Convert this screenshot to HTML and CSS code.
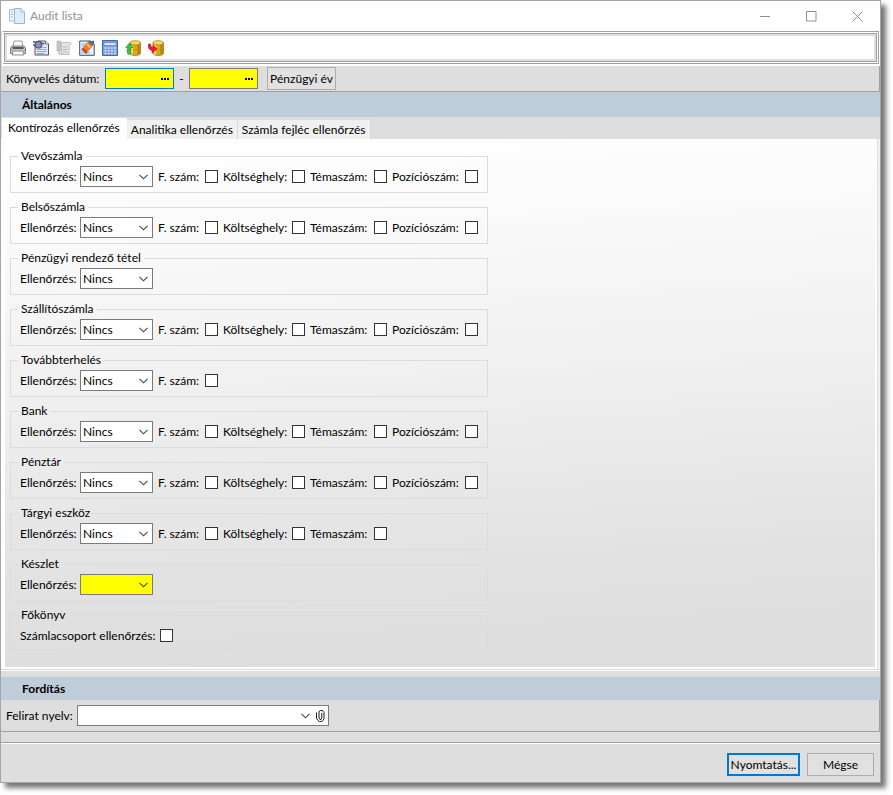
FILE: index.html
```html
<!DOCTYPE html>
<html lang="hu">
<head>
<meta charset="utf-8">
<title>Audit lista</title>
<link rel="stylesheet" href="styles.css">
</head>
<body>
<svg class="defs" aria-hidden="true">
  <symbol id="chevron" viewBox="0 0 9 6"><path d="M.5 .8l4 4 4-4" fill="none" stroke="#444" stroke-width="1.1"/></symbol>
  <symbol id="database" viewBox="0 0 16 16">
    <path d="M5 2.500v11c0 2.600 10.500 2.600 10.500 0v-11z" fill="#dda81c" stroke="#8e6710" stroke-width=".7"/>
    <path d="M7 5v9.500" stroke="#f8df72" stroke-width="2"/><path d="M13.500 4.500v9.500" stroke="#b27a0e" stroke-width="2"/>
    <ellipse cx="10.200" cy="2.800" rx="5.200" ry="2.100" fill="#f6d75e" stroke="#a37a18" stroke-width=".7"/>
    <path d="M5 8.500c1 2 9.500 2 10.500 0" fill="none" stroke="#b88818" stroke-width=".6"/>
  </symbol>
</svg>
<main class="window">
  <header class="titlebar">
    <svg class="icon" viewBox="0 0 16 16"><path d="M.5 1.500h5.500v11.500H.5z" fill="#eef6fd" stroke="#9dbbdc"/><path d="M2 4h2M2 6.500h2M2 9h2" stroke="#9dbbdc"/><path d="M5.500 .5h6.500l3.500 3.500v11.500h-10z" fill="#dceefb" stroke="#94b4d8"/><path d="M12 .5v3.500h3.500" fill="#fff" stroke="#94b4d8"/></svg>
    <h1>Audit lista</h1>
    <div class="caption-buttons">
      <button aria-label="Kis méret"><svg viewBox="0 0 11 11"><path d="M0 5.500h10"/></svg></button>
      <button aria-label="Teljes méret"><svg viewBox="0 0 11 11"><path d="M.5 .5h9.500v9.500H.5z"/></svg></button>
      <button aria-label="Bezárás"><svg viewBox="0 0 11 11"><path d="M.5 .5l10 10M10.500 .5l-10 10"/></svg></button>
    </div>
  </header>

  <div class="toolbar-frame"><div class="toolbar">
    <button aria-label="Nyomtatás"><svg class="icon" viewBox="0 0 16 16"><path d="M4 1h8l1 6H3z" fill="#fafafa" stroke="#858585" stroke-width=".8"/><path d="M2 6h12l1.500 2v5.500H.5V8z" fill="#c9cacb" stroke="#636568" stroke-width=".8"/><path d="M2.500 8h11" stroke="#38393b" stroke-width="1.600"/><path d="M3 11h10l1 4H2z" fill="#f6f6f6" stroke="#757779" stroke-width=".8"/><path d="M1 10h1.500M13.500 10H15" stroke="#64a860"/></svg></button>
    <button aria-label="Előnézet"><svg class="icon" viewBox="0 0 16 16"><path d="M5 1h7.500l3 3v11H2V4z" fill="#dce9fa" stroke="#4a5266"/><path d="M12.500 1v3h3" fill="#fff" stroke="#4a5266" stroke-width=".8"/><path d="M4 9.500h9.500M4 11.500h9.500M4 13.500h7M9.500 7.500h4" stroke="#8aa9dc"/><circle cx="5.500" cy="4.700" r="3.300" fill="#8793b3" stroke="#505a73" stroke-width="1.200"/><path d="M0 2h4M0 5h3M7.500 3.500h4" stroke="#505a73" stroke-width="1.400"/></svg></button>
    <button aria-label="Lista" disabled><svg class="icon" viewBox="0 0 16 16"><path d="M1 1h3.500v10H1z" fill="#c4c4c4" stroke="#aaa" stroke-width=".6"/><path d="M5.500 2.500h8c2 0 2 2.500 0 2.500H13v9.500H5.500z" fill="#e4e4e4" stroke="#b4b4b4" stroke-width=".8"/><path d="M7 7h4M7 9.500h4M7 12h4" stroke="#bbb"/><path d="M3 11v3h3" fill="none" stroke="#aaa"/></svg></button>
    <button aria-label="Szerkesztés"><svg class="icon" viewBox="0 0 16 16"><path d="M.7 1h11l3.500 3v11.300H.7z" fill="#e8f4ff" stroke="#37536e"/><path d="M2.500 4h5M2.500 6h4" stroke="#7cb2df"/><path d="M2 14V9l4-2 5 5v2z" fill="#a8d8fa"/><path d="M9 1.500l6-.8v3.800L8.500 12 4 7.500z" fill="#f27a1c"/><path d="M4 7.500L8.500 12 7 14 2.500 9z" fill="#dc3116"/><path d="M9 1.500l3 3.500 3-.5v-3.800z" fill="#3971b7"/><path d="M8 4l3 3.500" stroke="#ffd65e" stroke-width="1.500"/></svg></button>
    <button aria-label="Számológép"><svg class="icon" viewBox="0 0 16 16"><path d="M.5 .5h15v15H.5z" fill="#7b9fdc" stroke="#4168af"/><path d="M2 2.500h12v3H2z" fill="#d9e7fb" stroke="#4e73b5" stroke-width=".6"/><g stroke="#d3e0f6" stroke-width="1.500" stroke-dasharray="2 1.200"><path d="M2.500 8h11.500M2.500 10.700h11.500M2.500 13.400h11.500"/></g></svg></button>
    <button aria-label="Betöltés"><svg class="icon" viewBox="0 0 16 16"><use href="#database"/><path d="M3 14.500C1.500 11 2 9 3 7.500H.7L4.500 3 8 7.500H6c-1.500 2-1 4 .5 6z" fill="#36c64b" stroke="#159427" stroke-width=".6"/></svg></button>
    <button aria-label="Mentés"><svg class="icon" viewBox="0 0 16 16"><use href="#database"/><path d="M.5 4C0 8 1 10 4 10.500V13l5-4-4-4v2.500C3.500 7.500 2.500 6 2.500 4z" fill="#e51f35" stroke="#ad1023" stroke-width=".6"/></svg></button>
  </div></div>

  <form class="content">
    <div class="bar">
      <label class="field-label date-label" for="from">Könyvelés dátum:</label>
      <span class="date active"><input id="from" type="text"><button type="button" aria-label="Kezdő dátum választása"><i></i><i></i><i></i></button></span>
      <span class="dash">-</span>
      <span class="date"><input type="text" aria-label="Záró dátum"><button type="button" aria-label="Záró dátum választása"><i></i><i></i><i></i></button></span>
      <button type="button" class="btn year">Pénzügyi év</button>
    </div>

    <h2>Általános</h2>
    <div class="tabs" role="tablist">
      <button type="button" role="tab" class="selected" aria-selected="true">Kontírozás ellenőrzés</button>
      <button type="button" role="tab">Analitika ellenőrzés</button>
      <button type="button" role="tab">Számla fejléc ellenőrzés</button>
    </div>

    <div class="panel-edge"><section class="panel">
      <fieldset><legend>Vevőszámla</legend><div class="row">
        <label class="pick">Ellenőrzés: <span class="select"><select><option>Nincs</option></select><svg><use href="#chevron"/></svg></span></label>
        <label class="check account">F. szám: <input type="checkbox"></label>
        <label class="check cost">Költséghely: <input type="checkbox"></label>
        <label class="check topic">Témaszám: <input type="checkbox"></label>
        <label class="check position">Pozíciószám: <input type="checkbox"></label>
      </div></fieldset>
      <fieldset><legend>Belsőszámla</legend><div class="row">
        <label class="pick">Ellenőrzés: <span class="select"><select><option>Nincs</option></select><svg><use href="#chevron"/></svg></span></label>
        <label class="check account">F. szám: <input type="checkbox"></label>
        <label class="check cost">Költséghely: <input type="checkbox"></label>
        <label class="check topic">Témaszám: <input type="checkbox"></label>
        <label class="check position">Pozíciószám: <input type="checkbox"></label>
      </div></fieldset>
      <fieldset><legend>Pénzügyi rendező tétel</legend><div class="row">
        <label class="pick">Ellenőrzés: <span class="select"><select><option>Nincs</option></select><svg><use href="#chevron"/></svg></span></label>
      </div></fieldset>
      <fieldset><legend>Szállítószámla</legend><div class="row">
        <label class="pick">Ellenőrzés: <span class="select"><select><option>Nincs</option></select><svg><use href="#chevron"/></svg></span></label>
        <label class="check account">F. szám: <input type="checkbox"></label>
        <label class="check cost">Költséghely: <input type="checkbox"></label>
        <label class="check topic">Témaszám: <input type="checkbox"></label>
        <label class="check position">Pozíciószám: <input type="checkbox"></label>
      </div></fieldset>
      <fieldset><legend>Továbbterhelés</legend><div class="row">
        <label class="pick">Ellenőrzés: <span class="select"><select><option>Nincs</option></select><svg><use href="#chevron"/></svg></span></label>
        <label class="check account">F. szám: <input type="checkbox"></label>
      </div></fieldset>
      <fieldset><legend>Bank</legend><div class="row">
        <label class="pick">Ellenőrzés: <span class="select"><select><option>Nincs</option></select><svg><use href="#chevron"/></svg></span></label>
        <label class="check account">F. szám: <input type="checkbox"></label>
        <label class="check cost">Költséghely: <input type="checkbox"></label>
        <label class="check topic">Témaszám: <input type="checkbox"></label>
        <label class="check position">Pozíciószám: <input type="checkbox"></label>
      </div></fieldset>
      <fieldset><legend>Pénztár</legend><div class="row">
        <label class="pick">Ellenőrzés: <span class="select"><select><option>Nincs</option></select><svg><use href="#chevron"/></svg></span></label>
        <label class="check account">F. szám: <input type="checkbox"></label>
        <label class="check cost">Költséghely: <input type="checkbox"></label>
        <label class="check topic">Témaszám: <input type="checkbox"></label>
        <label class="check position">Pozíciószám: <input type="checkbox"></label>
      </div></fieldset>
      <fieldset><legend>Tárgyi eszköz</legend><div class="row">
        <label class="pick">Ellenőrzés: <span class="select"><select><option>Nincs</option></select><svg><use href="#chevron"/></svg></span></label>
        <label class="check account">F. szám: <input type="checkbox"></label>
        <label class="check cost">Költséghely: <input type="checkbox"></label>
        <label class="check topic">Témaszám: <input type="checkbox"></label>
      </div></fieldset>
      <fieldset><legend>Készlet</legend><div class="row">
        <label class="pick">Ellenőrzés: <span class="select required"><select><option></option></select><svg><use href="#chevron"/></svg></span></label>
      </div></fieldset>
      <fieldset class="last"><legend>Főkönyv</legend><div class="row">
        <label class="check group">Számlacsoport ellenőrzés: <input type="checkbox"></label>
      </div></fieldset>
    </section></div>

    <h2>Fordítás</h2>
    <div class="bar language">
      <label class="field-label language-label" for="lang">Felirat nyelv:</label>
      <span class="select wide"><select id="lang"><option></option></select><svg><use href="#chevron"/></svg><button type="button" aria-label="Csatolás"><svg viewBox="0 0 9 12"><path d="M.5 2.500v6l1.500 2 1.500 1h2l1.500-1 1-2v-6L6.500 .5h-2l-1.500 1v6.500l1 1.500h1l.8-1.500V3" fill="none" stroke="#000" stroke-width=".9"/></svg></button></span>
    </div>
  </form>

  <footer>
    <button class="btn primary">Nyomtatás...</button>
    <button class="btn cancel">Mégse</button>
  </footer>
</main>
</body>
</html>
```
FILE: styles.css
```css
* { box-sizing: border-box; }

body {
  margin: 0;
  background: #fff;
  color: #000;
  font: 12px/16px Lato, "Open Sans", sans-serif;
}

button, input, select {
  margin: 0;
  padding: 0;
  border: 0;
  border-radius: 0;
  background: none;
  color: inherit;
  font: inherit;
}

.defs { position: absolute; width: 0; height: 0; }
.icon { display: block; width: 16px; height: 16px; }

.window {
  display: flex;
  flex-direction: column;
  min-height: calc(100vh - 12px);
  margin: 0 12px 12px 0;
  border: 1px solid #a5a5a5;
  background: #dedede;
  box-shadow: 5px 5px 5px #777;
}

/* Title bar */
.titlebar {
  display: flex;
  align-items: center;
  height: 30px;
  padding-left: 8px;
  background: #fff;
  color: #929292;
}
h1 { margin: 0 0 0 5px; font-size: 12px; font-weight: 400; }
.caption-buttons { display: flex; margin-left: auto; }
.caption-buttons button { display: grid; place-items: center; width: 46px; height: 28px; }
.caption-buttons svg { width: 11px; height: 11px; fill: none; stroke: #909090; }

/* Toolbar */
.toolbar-frame {
  padding: 1px;
  border: solid #a0a0a0;
  border-width: 1px 1px 1px 0;
  margin: 0 1px 0 2px;
  background: #fff;
  outline: 2px solid #fff;
  outline-offset: 0;
  clip-path: inset(0 -1px -2px -1px);
}
.toolbar {
  display: flex;
  align-items: center;
  gap: 7px;
  height: 29px;
  padding: 0 5px;
  border: 1px solid #a0a0a0;
  box-shadow: inset 0 0 0 2px #dedede;
}

/* Form bars */
.content { margin-top: 2px; border-bottom: 1px solid #a0a0a0; }
.bar {
  display: flex;
  align-items: center;
  height: 26px;
  padding-left: 5px;
  border-bottom: 1px solid #a0a0a0;
  border-right: 1px solid #a0a0a0;
}
.field-label { white-space: nowrap; }
.date-label { min-width: 99px; }
.language-label { min-width: 71px; }
.date {
  display: flex;
  width: 69px;
  height: 21px;
  border: 1px solid #7a7a7a;
  background: #ff0;
}
.date.active { border-color: #0078d7; }
.date input { flex: 1; min-width: 0; }
.date button { display: flex; align-items: center; gap: 1px; padding: 0 4px; }
.date i { width: 2px; height: 2px; background: #000; }
.dash { width: 15px; text-align: center; }

.btn { height: 23px; border: 1px solid #adadad; background: #e1e1e1; white-space: nowrap; }
.year { width: 69px; margin-left: 9px; }

h2 {
  margin: 0;
  padding-left: 21px;
  background: #bfccda;
  font-size: 12px;
  font-weight: 700;
  line-height: 25px;
}

/* Tabs */
.tabs { display: flex; align-items: flex-end; height: 22px; padding: 1px 0 0 1px; }
.tabs button {
  height: 20px;
  padding: 0 4px;
  border: solid #d9d9d9;
  border-width: 1px 1px 0 0;
  background: #f0f0f0;
  white-space: nowrap;
}
.tabs .selected { height: 21px; padding: 0 6px 3px; border-color: #fff; background: #fff; }

.panel-edge {
  padding-right: 1px;
  border-bottom: 1px solid #d9d9d9;
  border-right: 2px solid #f0f0f0;
}
.panel {
  padding: 8px 5px 10px;
  border: solid #fff;
  border-width: 2px 2px 2px 4px;
  background: linear-gradient(177deg, #fff, #fafafa 18%, #eee 50%, #e2e2e2 78%, #dedede 94%) padding-box;
}

fieldset {
  width: 478px;
  max-width: 100%;
  min-width: 0;
  margin: 0 0 7px;
  padding: 3px 9px 5px;
  border: 1px solid #dcdcdc;
}
fieldset.last { padding-bottom: 3px; }
legend { margin-left: -2px; padding: 0 3px; line-height: 14px; }
.row { display: flex; align-items: center; gap: 5px; height: 21px; }
.pick, .check {
  display: flex;
  flex: none;
  align-items: center;
  justify-content: space-between;
  white-space: nowrap;
}
.pick { width: 133px; }
.account { width: 60px; }
.cost { width: 82px; }
.topic { width: 77px; }
.position { width: 86px; }
.group { width: 153px; }
.check input {
  appearance: none;
  flex: none;
  width: 13px;
  height: 13px;
  border: 1px solid #333;
  background: #fff;
}

.select { position: relative; display: flex; width: 73px; height: 21px; border: 1px solid #7a7a7a; background: #fff; }
.select select { appearance: none; flex: 1; min-width: 0; padding: 0 18px 0 2px; }
.select > svg { position: absolute; right: 4px; top: 7px; width: 9px; height: 6px; pointer-events: none; }
.required { background: #ff0; }
.wide { width: 252px; max-width: 100%; }
.wide > svg { right: 18px; }
.wide button { display: flex; align-items: center; padding-right: 3px; }
.wide button svg { width: 9px; height: 12px; }

.panel-edge + h2 { margin-top: 7px; line-height: 23px; box-shadow: 0 -6px #dedede, 0 -7px #fff; }
.language { height: 31px; border-bottom: 0; }

/* Dialog actions */
footer {
  flex: 1;
  display: flex;
  align-items: center;
  justify-content: flex-end;
  gap: 7px;
  margin-top: 10px;
  padding: 4px 6px 0 0;
  min-height: 40px;
  border-top: 1px solid #a0a0a0;
  box-shadow: inset 0 1px #fff;
}
.primary { width: 73px; border: 2px solid #0078d7; }
.cancel { width: 67px; }
```
